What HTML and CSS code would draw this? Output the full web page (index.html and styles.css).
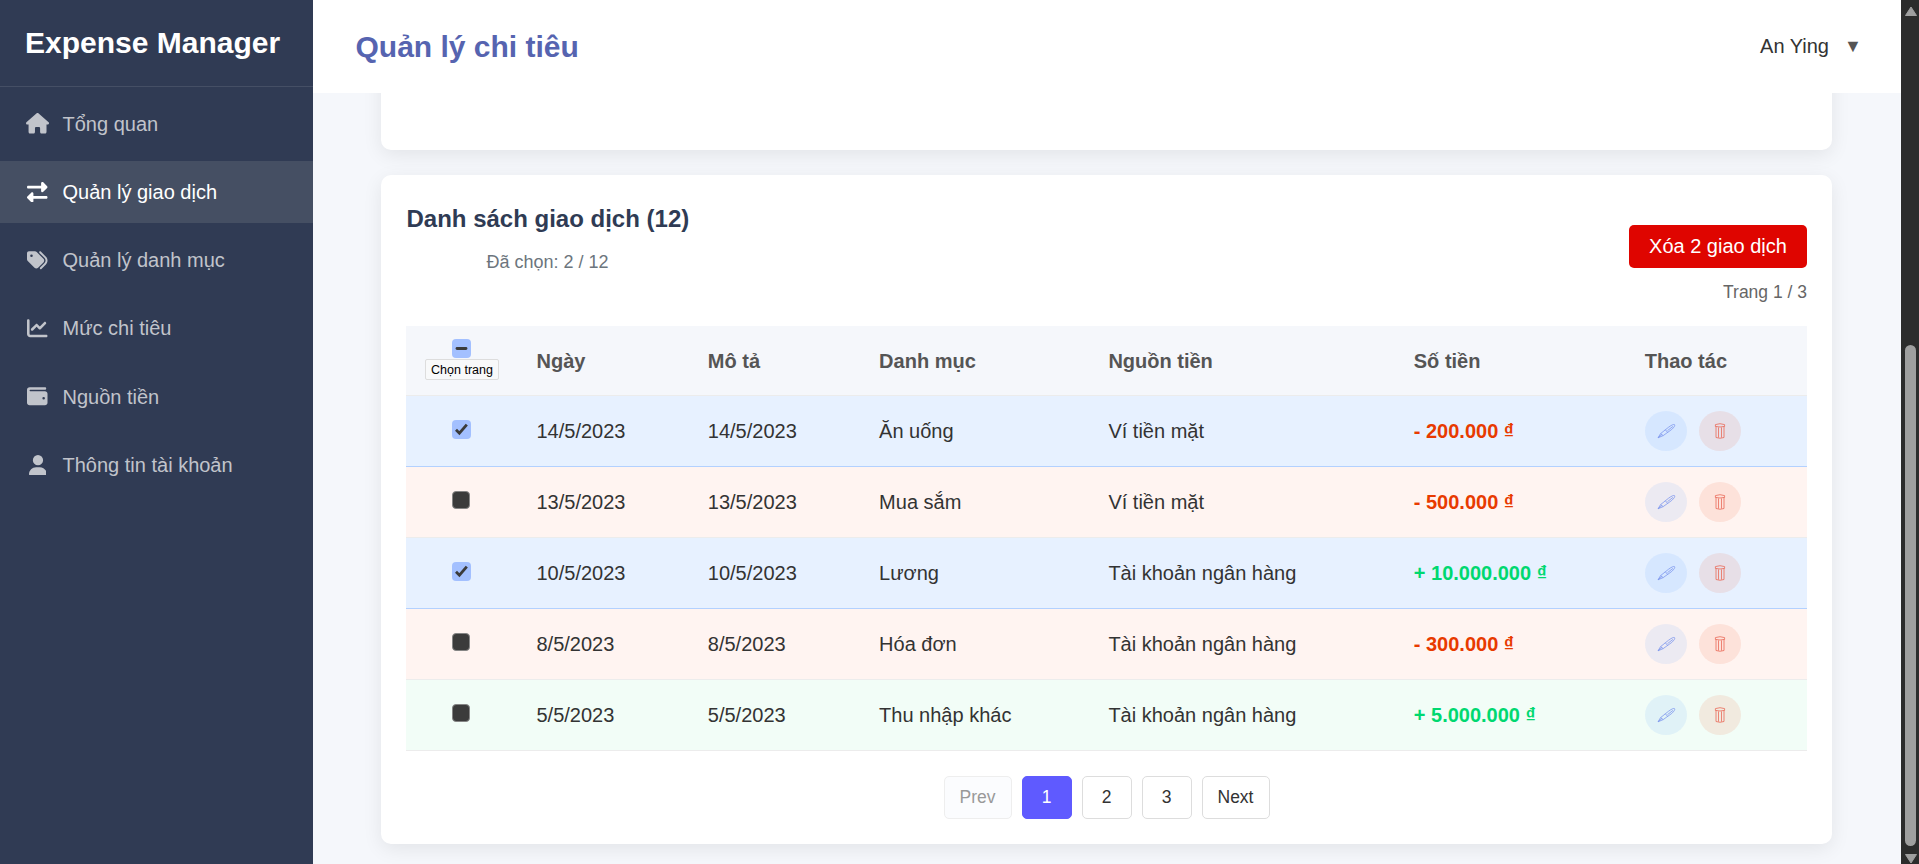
FILE: index.html
```html
<!DOCTYPE html>
<html lang="vi">
<head>
<meta charset="utf-8">
<title>Expense Manager</title>
<link rel="stylesheet" href="styles.css">
</head>
<body>
<svg class="defs" width="0" height="0">
  <symbol id="pen" viewBox="0 0 20 18"><path d="M2 15.8 4.6 11.6 12.6 5.2Q17.4 1.7 18.6 2.7 19.4 4 15.8 7.4L7.2 13.6ZM4.6 11.6 7.2 13.6M9.4 7.8 11.6 10.4M2 15.8 5.8 12.6M11.5 8.6 17 4.4"/></symbol>
  <symbol id="bin" viewBox="0 0 12 18"><path d="M2 4.2V15.5Q6 17 10 15.5V4.2M4.5 5.4V15.6M7.5 5.4V15.6M1.4 4.4V2.6Q6 .8 10.6 2.6V4.4Q6 5.6 1.4 4.4Z"/></symbol>
</svg>
<div class="app">
  <aside class="sidebar">
    <div class="brand">Expense Manager</div>
    <nav class="menu">
      <a class="item"><span class="ico"><svg viewBox="0 0 576 512"><path d="M575.8 255.5c0 18-15 32.1-32 32.1l-32 0 .7 160.2c0 2.7-.2 5.4-.5 8.1l0 16.2c0 22.1-17.9 40-40 40l-16 0c-1.1 0-2.2 0-3.3-.1c-1.4 .1-2.8 .1-4.2 .1L416 512l-24 0c-22.1 0-40-17.9-40-40l0-24 0-64c0-17.7-14.3-32-32-32l-64 0c-17.7 0-32 14.3-32 32l0 64 0 24c0 22.1-17.9 40-40 40l-24 0-31.9 0c-1.5 0-3-.1-4.5-.2c-1.2 .1-2.4 .2-3.6 .2l-16 0c-22.1 0-40-17.9-40-40l0-112c0-.9 0-1.9 .1-2.8l0-69.7-32 0c-18 0-32-14-32-32.1c0-9 3-17 10-24L266.4 8c7-7 15-8 22-8s15 2 21 7L564.8 231.5c8 7 12 15 11 24z"/></svg></span>Tổng quan</a>
      <a class="item active"><span class="ico"><svg viewBox="0 0 512 512"><path d="M32 96l320 0 0-64c0-12.9 7.8-24.6 19.8-29.6s25.7-2.2 34.9 6.9l96 96c6 6 9.4 14.1 9.4 22.6s-3.4 16.6-9.4 22.6l-96 96c-9.2 9.2-22.9 11.9-34.9 6.9s-19.8-16.6-19.8-29.6l0-64L32 160c-17.7 0-32-14.3-32-32s14.3-32 32-32zM480 352c17.7 0 32 14.3 32 32s-14.3 32-32 32l-320 0 0 64c0 12.9-7.8 24.6-19.8 29.6s-25.7 2.2-34.9-6.9l-96-96c-6-6-9.4-14.1-9.4-22.6s3.4-16.6 9.4-22.6l96-96c9.2-9.2 22.9-11.9 34.9-6.9s19.8 16.6 19.8 29.6l0 64 320 0z"/></svg></span>Quản lý giao dịch</a>
      <a class="item"><span class="ico"><svg viewBox="0 0 512 512"><path d="M345 39.1L472.8 168.4c52.4 53 52.4 138.2 0 191.2L360.8 472.9c-9.3 9.4-24.5 9.5-33.9 .2s-9.5-24.5-.2-33.9L438.6 325.9c33.9-34.3 33.9-89.4 0-123.7L310.9 72.9c-9.3-9.4-9.2-24.6 .2-33.9s24.6-9.2 33.9 .2zM0 229.5L0 80C0 53.5 21.5 32 48 32l149.5 0c17 0 33.3 6.7 45.3 18.7l168 168c25 25 25 65.5 0 90.5L277.3 442.7c-25 25-65.5 25-90.5 0l-168-168C6.7 262.7 0 246.5 0 229.5zM144 144a32 32 0 1 0 -64 0 32 32 0 1 0 64 0z"/></svg></span>Quản lý danh mục</a>
      <a class="item"><span class="ico"><svg viewBox="0 0 512 512"><path d="M64 64c0-17.7-14.3-32-32-32S0 46.3 0 64L0 400c0 44.2 35.8 80 80 80l400 0c17.7 0 32-14.3 32-32s-14.3-32-32-32L80 416c-8.8 0-16-7.2-16-16L64 64zm406.6 86.6c12.5-12.5 12.5-32.8 0-45.3s-32.8-12.5-45.3 0L320 210.7l-57.4-57.4c-12.5-12.5-32.8-12.5-45.3 0l-112 112c-12.5 12.5-12.5 32.8 0 45.3s32.8 12.5 45.3 0L240 221.3l57.4 57.4c12.5 12.5 32.8 12.5 45.3 0l128-128z"/></svg></span>Mức chi tiêu</a>
      <a class="item"><span class="ico"><svg viewBox="0 0 512 512"><path d="M64 32C28.7 32 0 60.7 0 96L0 416c0 35.3 28.7 64 64 64l384 0c35.3 0 64-28.7 64-64l0-224c0-35.3-28.7-64-64-64L80 128c-8.8 0-16-7.2-16-16s7.2-16 16-16l368 0c17.7 0 32-14.3 32-32s-14.3-32-32-32L64 32zM416 272a32 32 0 1 1 0 64 32 32 0 1 1 0-64z"/></svg></span>Nguồn tiền</a>
      <a class="item"><span class="ico"><svg viewBox="0 0 448 512"><path d="M224 256A128 128 0 1 0 224 0a128 128 0 1 0 0 256zm-45.7 48C79.8 304 0 383.8 0 482.3C0 498.7 13.3 512 29.7 512l388.6 0c16.4 0 29.7-13.3 29.7-29.7C448 383.8 368.2 304 269.7 304l-91.4 0z"/></svg></span>Thông tin tài khoản</a>
    </nav>
  </aside>
  <main class="main">
    <header class="topbar">
      <h1 class="title">Quản lý chi tiêu</h1>
      <div class="user">An Ying<span class="caret">▼</span></div>
    </header>
    <div class="content">
      <section class="card previous"></section>
      <section class="card">
        <div class="card-head">
          <div>
            <h2 class="list-title">Danh sách giao dịch (12)</h2>
            <div class="selected-count">Đã chọn: 2 / 12</div>
          </div>
          <div class="head-actions">
            <button class="delete">Xóa 2 giao dịch</button>
            <div class="page-info">Trang 1 / 3</div>
          </div>
        </div>
        <table class="list">
          <colgroup><col class="c1"><col class="c2"><col class="c2"><col class="c4"><col class="c5"><col class="c6"><col class="c7"></colgroup>
          <thead><tr>
            <th class="pick"><span class="box on"><svg viewBox="0 0 19 19"><path d="M5 9.5H14"/></svg></span><button class="pick-page">Chọn trang</button></th>
            <th>Ngày</th><th>Mô tả</th><th>Danh mục</th><th>Nguồn tiền</th><th>Số tiền</th><th>Thao tác</th>
          </tr></thead>
          <tbody>
            <tr class="selected"><td class="pick"><span class="box on"><svg viewBox="0 0 19 19"><path d="M4 9.8 7.4 13.2 14.8 4.6"/></svg></span></td><td>14/5/2023</td><td>14/5/2023</td><td>Ăn uống</td><td>Ví tiền mặt</td><td class="amount minus">- 200.000 ₫</td><td><div class="acts"><span class="act edit"><svg><use href="#pen"/></svg></span><span class="act del"><svg><use href="#bin"/></svg></span></div></td></tr>
            <tr class="expense"><td class="pick"><span class="box"></span></td><td>13/5/2023</td><td>13/5/2023</td><td>Mua sắm</td><td>Ví tiền mặt</td><td class="amount minus">- 500.000 ₫</td><td><div class="acts"><span class="act edit"><svg><use href="#pen"/></svg></span><span class="act del"><svg><use href="#bin"/></svg></span></div></td></tr>
            <tr class="selected"><td class="pick"><span class="box on"><svg viewBox="0 0 19 19"><path d="M4 9.8 7.4 13.2 14.8 4.6"/></svg></span></td><td>10/5/2023</td><td>10/5/2023</td><td>Lương</td><td>Tài khoản ngân hàng</td><td class="amount plus">+ 10.000.000 ₫</td><td><div class="acts"><span class="act edit"><svg><use href="#pen"/></svg></span><span class="act del"><svg><use href="#bin"/></svg></span></div></td></tr>
            <tr class="expense"><td class="pick"><span class="box"></span></td><td>8/5/2023</td><td>8/5/2023</td><td>Hóa đơn</td><td>Tài khoản ngân hàng</td><td class="amount minus">- 300.000 ₫</td><td><div class="acts"><span class="act edit"><svg><use href="#pen"/></svg></span><span class="act del"><svg><use href="#bin"/></svg></span></div></td></tr>
            <tr class="income"><td class="pick"><span class="box"></span></td><td>5/5/2023</td><td>5/5/2023</td><td>Thu nhập khác</td><td>Tài khoản ngân hàng</td><td class="amount plus">+ 5.000.000 ₫</td><td><div class="acts"><span class="act edit"><svg><use href="#pen"/></svg></span><span class="act del"><svg><use href="#bin"/></svg></span></div></td></tr>
          </tbody>
        </table>
        <div class="pager">
          <button class="page wide disabled">Prev</button>
          <button class="page current">1</button>
          <button class="page">2</button>
          <button class="page">3</button>
          <button class="page wide">Next</button>
        </div>
      </section>
    </div>
  </main>
  <div class="scrollbar">
    <svg class="arrow" viewBox="0 0 14 11"><path d="M7 1 12.5 9.5H1.5Z"/></svg>
    <div class="thumb"></div>
    <svg class="arrow" viewBox="0 0 14 11"><path d="M7 10 12.5 1.5H1.5Z"/></svg>
  </div>
</div>
</body>
</html>
```
FILE: styles.css
```css
* { box-sizing: border-box; }
body {
  margin: 0;
  font-family: "Liberation Sans", Arial, sans-serif;
  font-size: 20px;
  color: #333;
  overflow: hidden;
}
button { font-family: inherit; padding: 0; }
.defs { display: block; }
.app { display: flex; height: 864px; }

/* Sidebar */
.sidebar { width: 313px; background: #303b54; }
.brand {
  height: 87px;
  padding: 9px 25px;
  line-height: 68px;
  font-size: 30px;
  font-weight: bold;
  color: #fff;
  border-bottom: 1px solid #454f65;
}
.menu { display: flex; flex-direction: column; gap: 6.25px; padding-top: 6px; }
.item {
  display: flex;
  align-items: center;
  gap: 12.5px;
  height: 62px;
  padding: 0 0 0 25px;
  color: #c1c4cb;
}
.item.active { background: #454f63; color: #fff; }
.ico { display: flex; justify-content: center; width: 25px; padding-bottom: 1px; }
.ico svg { height: 20.5px; fill: currentColor; }

/* Main column */
.main { flex: 1; display: flex; flex-direction: column; min-width: 0; background: #f5f7fb; }
.topbar {
  flex: none;
  display: flex;
  align-items: center;
  justify-content: space-between;
  height: 93px;
  padding: 0 41px 0 42.5px;
  background: #fff;
}
.title { margin: 0; font-size: 30px; color: #5664b0; }
.user { display: flex; align-items: center; gap: 15px; }
.caret { font-size: 18px; width: 16px; color: #555; }
.content {
  flex: 1;
  display: flex;
  flex-direction: column;
  justify-content: flex-end;
  gap: 25px;
  min-height: 0;
  padding: 0 69px 20px 68px;
  overflow: hidden;
}
.card {
  flex: none;
  height: 669px;
  padding: 25px;
  background: #fff;
  border-radius: 10px;
  box-shadow: 0 5px 19px rgba(0, 0, 0, .08);
}
.card.previous { height: 240px; }
.card-head { display: flex; justify-content: space-between; height: 126px; }
.list-title { margin: 4px 0 0 .5px; font-size: 24px; line-height: 30px; color: #2f3b54; }
.selected-count { margin: 17px 0 0 80.5px; font-size: 18px; line-height: 22px; color: #6c757d; }
.head-actions { display: flex; flex-direction: column; align-items: flex-end; padding-top: 25px; }
.delete {
  width: 178px;
  height: 43px;
  border: 0;
  border-radius: 5px;
  background: #df0500;
  color: #fff;
  font-size: 20px;
}
.page-info { margin-top: 13px; font-size: 17.5px; line-height: 22px; color: #666; }

/* Transactions */
.list { width: 1401px; table-layout: fixed; border-collapse: separate; border-spacing: 0; }
.c1 { width: 111.5px; }
.c2 { width: 171.3px; }
.c4 { width: 229.3px; }
.c5 { width: 305.4px; }
.c6 { width: 231px; }
.list th, .list td { padding: 0 0 0 19px; text-align: left; border-bottom: 1px solid #ececec; }
.list th { height: 70px; padding-top: 1px; background: #f5f7fb; color: #555; }
.list td { height: 71px; }
.list .pick { padding: 0; text-align: center; }
.selected td { background: #e7f1ff; border-bottom-color: #b3d1ff; }
.expense td { background: #fff4f1; }
.income td { background: #f2fdf7; }
.box {
  display: block;
  width: 18px;
  height: 18px;
  margin: 0 auto 4px 46px;
  border: 1.5px solid #858585;
  border-radius: 4px;
  background: #3b3b3b;
}
.box.on { width: 19px; height: 19px; border: 0; background: #a3c0ff; }
.box svg { display: block; fill: none; stroke: #3b3b3b; stroke-width: 2.8; }
.list th .box { margin: 0 auto 0 46px; }
th .box svg { stroke-linecap: round; }
.pick-page {
  display: block;
  width: 74px;
  height: 21px;
  margin: 1px auto 2px 19px;
  border: 1px solid #ddd;
  border-radius: 2px;
  background: #f8f9fa;
  color: #000;
  font-size: 12.5px;
}
.amount { font-weight: bold; }
.minus { color: #e83a00; }
.plus { color: #00d870; }
.acts { display: flex; gap: 12px; }
.act {
  display: flex;
  align-items: center;
  justify-content: center;
  width: 42px;
  height: 40px;
  border-radius: 50%;
}
.act svg { fill: none; stroke-width: .8; }
.edit { background: rgba(67, 145, 255, .1); }
.edit svg { width: 20px; height: 18px; stroke: #7d97ee; }
.del { background: rgba(240, 70, 20, .1); }
.del svg { width: 12px; height: 18px; stroke: #ea6a58; }

/* Pagination */
.pager { display: flex; justify-content: center; gap: 10px; margin-top: 25px; }
.page {
  width: 50px;
  height: 43px;
  border: 1px solid #ddd;
  border-radius: 5px;
  background: #fff;
  color: #333;
  font-size: 17.5px;
}
.page.wide { width: 68px; }
.page.disabled { background: #fbfcfe; border-color: #eee; color: #999; }
.page.current { background: #5f5aff; border-color: #5f5aff; color: #fff; }

/* Scroll track */
.scrollbar {
  display: flex;
  flex-direction: column;
  align-items: center;
  justify-content: space-between;
  width: 18px;
  padding: 6px 0 0 1px;
  background: #2c2c2c;
}
.arrow { flex: none; width: 14px; height: 11px; fill: #9f9f9f; stroke: #9f9f9f; stroke-linejoin: round; }
.thumb { width: 11px; height: 501px; margin: auto 0 7px; border-radius: 6px; background: #9f9f9f; }
```
